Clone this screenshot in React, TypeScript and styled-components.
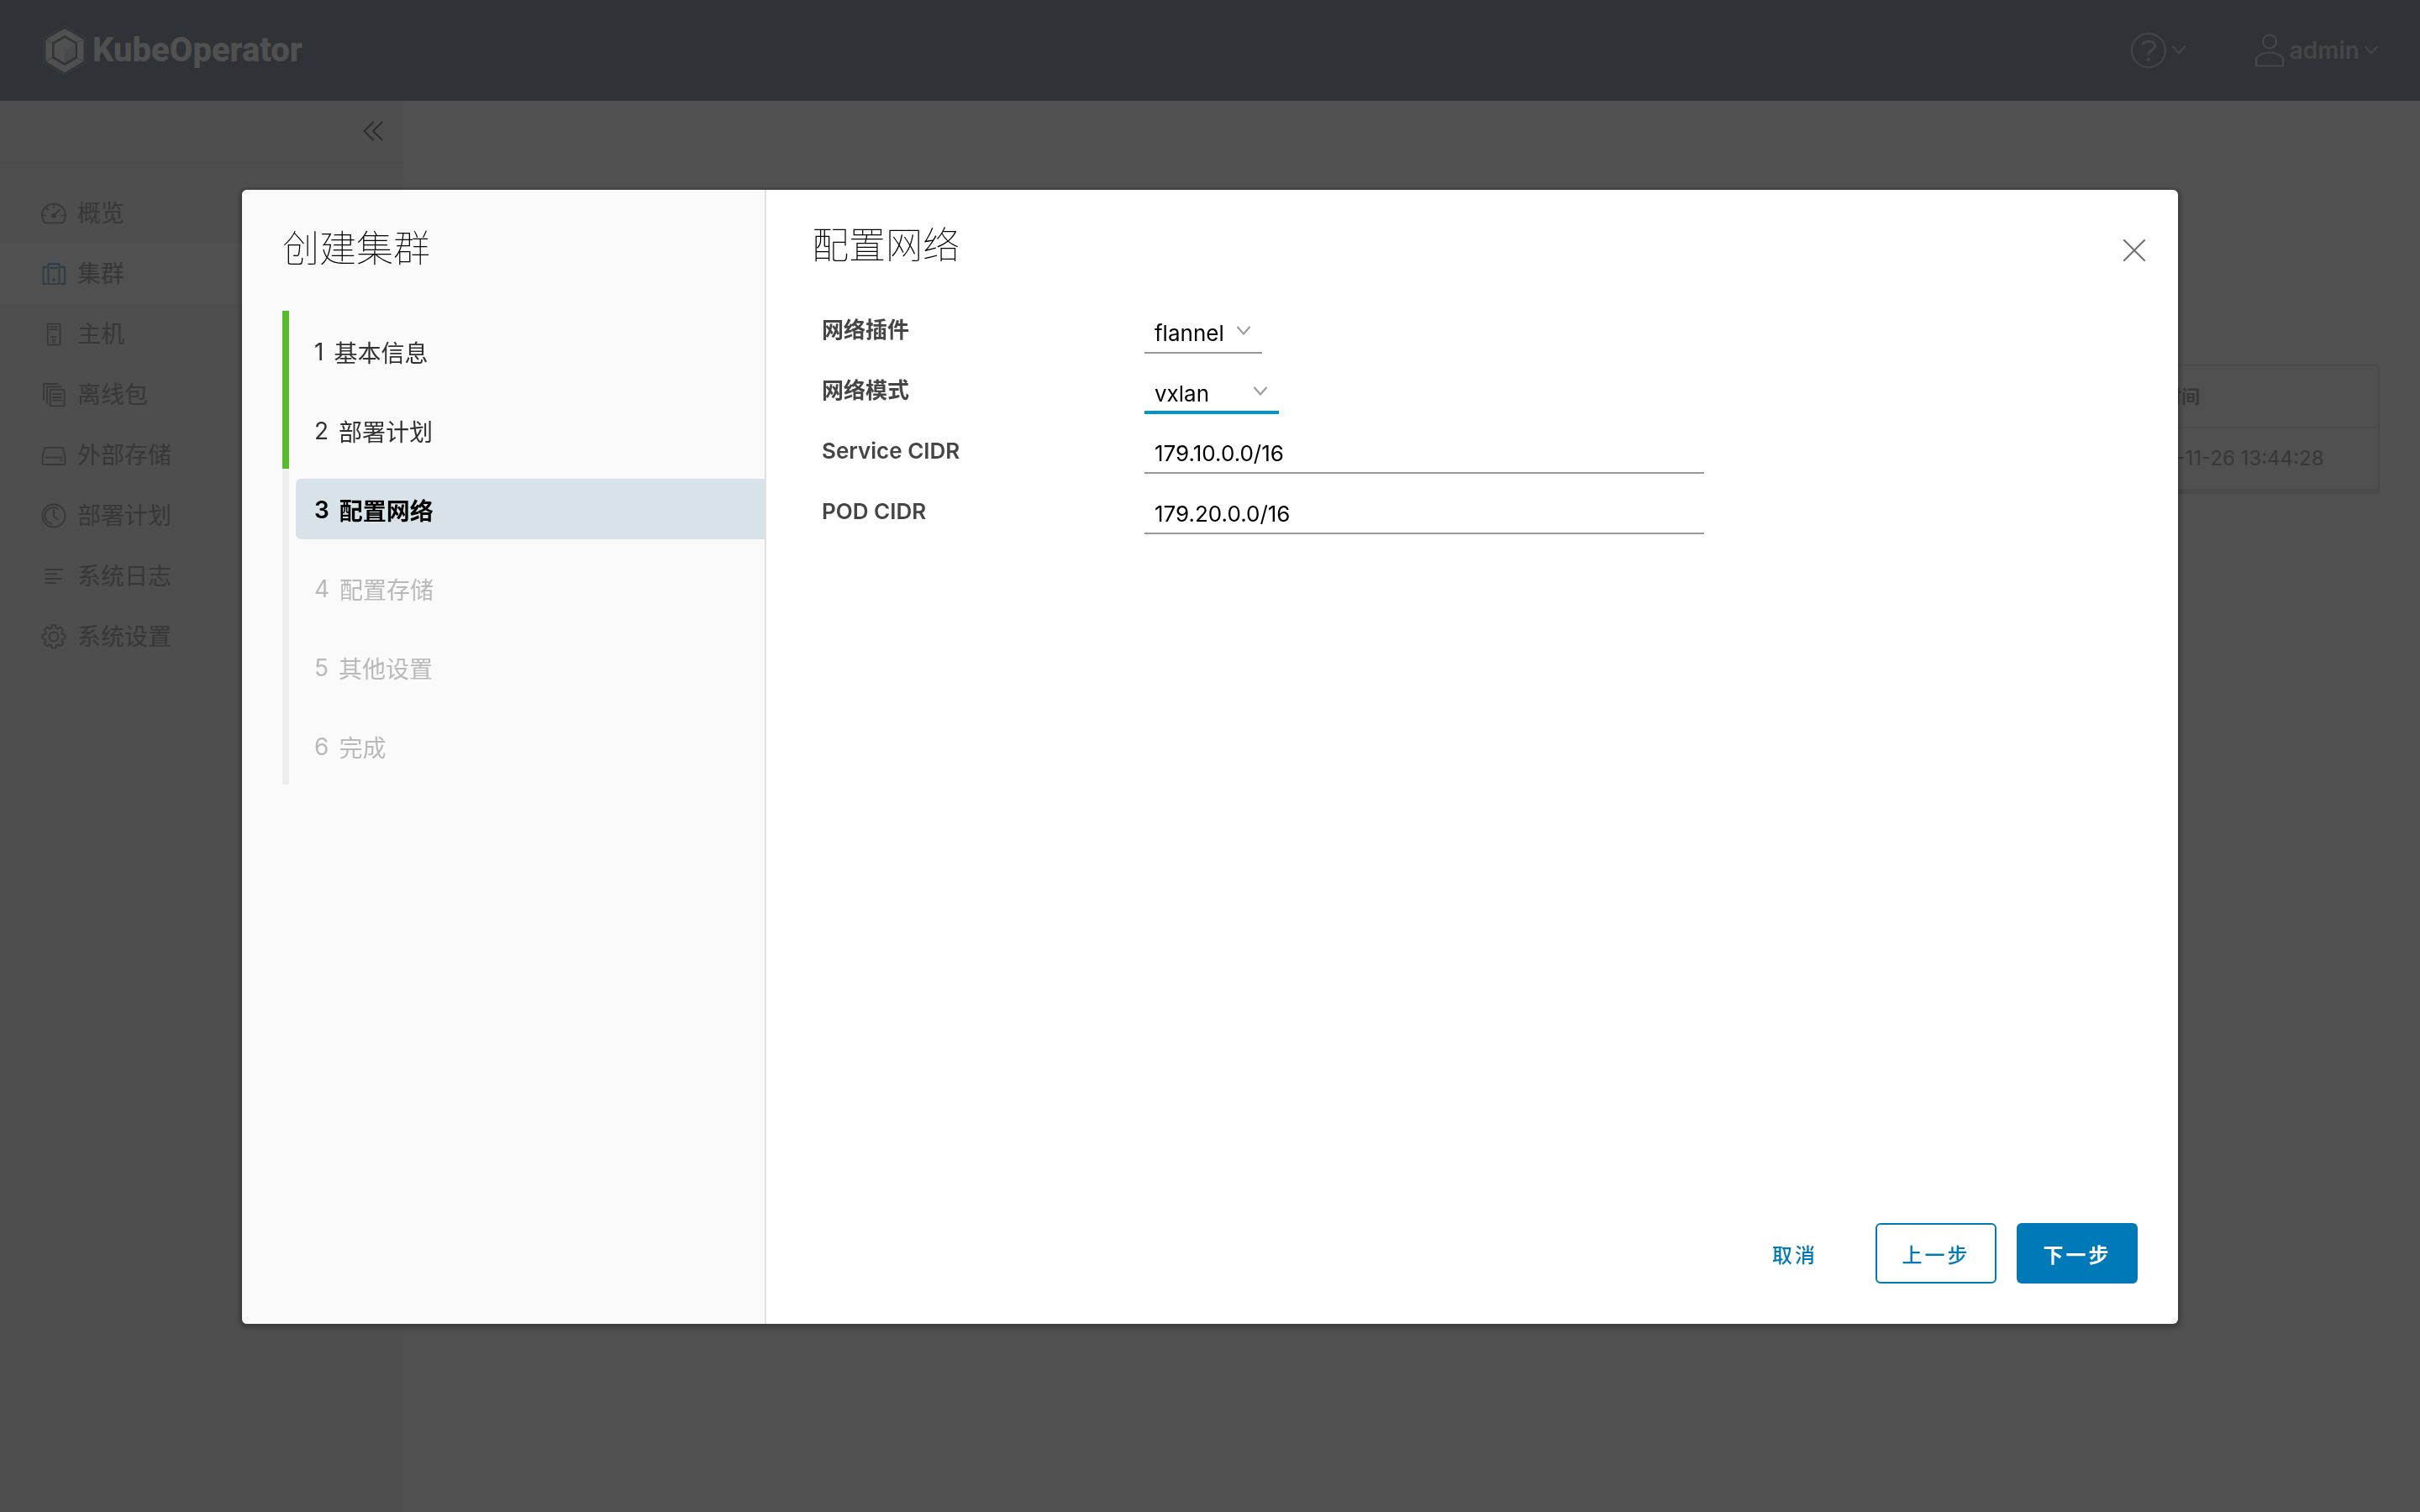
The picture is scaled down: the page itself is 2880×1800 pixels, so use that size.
import React from "react";
import styled, { createGlobalStyle } from "styled-components";

const latin = `Inter, "Noto Sans CJK SC", sans-serif`;

const GlobalStyle = createGlobalStyle`
  *, *::before, *::after { box-sizing: border-box; }
  body {
    margin: 0;
    background: #fafafa;
    color: #565656;
    font-family: ${latin};
    font-size: 28px;
    line-height: 48px;
  }
  button, input, select { font-family: inherit; }
  h1, h2, ul, ol { margin: 0; padding: 0; }
  ul, ol { list-style: none; }
`;

const Shell = styled.div`
  display: flex;
  flex-direction: column;
  min-height: 100vh;
`;

const Header = styled.header`
  display: flex;
  align-items: center;
  justify-content: space-between;
  height: 120px;
  padding: 0 50px;
  background: #253754;
`;

const Brand = styled.a`
  display: flex;
  align-items: center;
  gap: 6px;
  color: #ffffff;
  font-family: Roboto, sans-serif;
  font-size: 40px;
  font-weight: 800;
  text-decoration: none;
`;

const HeaderActions = styled.div`
  display: flex;
  align-items: center;
  gap: 82px;
`;

const HeaderButton = styled.button`
  display: flex;
  align-items: center;
  gap: 6px;
  padding: 0;
  border: 0;
  background: none;
  color: #ffffff;
  opacity: 0.65;
  font-size: 28px;
  font-weight: 600;
  line-height: 48px;
`;

const Body = styled.div`
  display: flex;
  flex: 1;
`;

const Sidebar = styled.nav`
  flex: 0 0 480px;
  background: #eeeeee;
`;

const SidebarTop = styled.div`
  display: flex;
  align-items: center;
  justify-content: flex-end;
  height: 74px;
  padding: 0 20px;
  border-bottom: 2px solid #dddddd;
`;

const CollapseButton = styled.button`
  display: flex;
  padding: 0;
  border: 0;
  background: none;
  color: #000000;
`;

const Menu = styled.ul`
  padding: 24px 0;
`;

const MenuLink = styled.a<{ $active?: boolean }>`
  display: flex;
  align-items: center;
  gap: 12px;
  height: 72px;
  padding: 0 48px;
  background: ${(p) => (p.$active ? "#ffffff" : "transparent")};
  color: #565656;
  text-decoration: none;

  svg {
    color: ${(p) => (p.$active ? "#0079b8" : "#565656")};
  }
`;

const Main = styled.main`
  flex: 1;
  padding: 314px 48px 48px;
`;

const Grid = styled.table`
  width: 100%;
  border: 2px solid #cccccc;
  border-bottom-width: 6px;
  border-radius: 6px 6px 0 0;
  border-spacing: 0;
  background: #ffffff;
  text-align: left;
`;

const GridHead = styled.th`
  width: 324px;
  height: 74px;
  padding: 0 24px;
  border-bottom: 2px solid #dddddd;
  font-size: 22px;
  font-weight: 600;
`;

const GridCell = styled.td`
  height: 72px;
  padding: 0 24px;
  font-size: 24px;
  white-space: nowrap;
`;

const GridSpacer = styled.td<{ $line?: boolean }>`
  border-bottom: ${(p) => (p.$line ? "2px solid #dddddd" : "0")};
`;

const Backdrop = styled.div`
  position: fixed;
  inset: 0;
  padding: 226px 10% 0;
  background: rgba(49, 49, 49, 0.85);
`;

const Wizard = styled.section`
  display: flex;
  height: 75vh;
  border-radius: 6px;
  background: #ffffff;
  box-shadow: 0 2px 4px 4px rgba(0, 0, 0, 0.2);
  overflow: hidden;
`;

const StepPane = styled.aside`
  flex: 0 0 624px;
  padding: 46px 0 48px 48px;
  border-right: 2px solid #e0e0e0;
  background: #fafafa;
`;

const Title = styled.h1`
  color: #000000;
  font-size: 44px;
  font-weight: 100;
  line-height: 48px;
`;

const Steps = styled.ol`
  margin-top: 50px;
`;

const Step = styled.li<{ $done?: boolean }>`
  padding: 12px 0 10px 8px;
  border-left: 8px solid ${(p) => (p.$done ? "#5aba2f" : "#eeeeee")};
`;

type StepState = "done" | "current" | "todo";

const stepColor: Record<StepState, string> = {
  done: "#313131",
  current: "#000000",
  todo: "#b9b9b9",
};

const StepButton = styled.button<{ $state: StepState }>`
  display: flex;
  align-items: center;
  gap: 12px;
  width: 100%;
  height: 72px;
  padding: 2px 22px 0;
  border: 0;
  border-radius: 6px 0 0 6px;
  background: ${(p) => (p.$state === "current" ? "#d8e3e9" : "transparent")};
  color: ${(p) => stepColor[p.$state]};
  font-size: 28px;
  font-weight: ${(p) => (p.$state === "current" ? 600 : 400)};
`;

const Page = styled.div`
  display: flex;
  flex: 1;
  flex-direction: column;
  padding: 42px 48px 48px 54px;
`;

const PageHead = styled.div`
  display: flex;
  align-items: flex-start;
  justify-content: space-between;
`;

const CloseButton = styled.button`
  display: flex;
  margin: 12px -14px 0 0;
  padding: 0;
  border: 0;
  background: none;
  color: #737373;
`;

const Form = styled.form`
  display: flex;
  flex: 1;
  flex-direction: column;
  gap: 24px;
  padding: 56px 12px 0;
`;

const Field = styled.div`
  display: grid;
  grid-template-columns: 384px minmax(0, 666px);
  height: 48px;
`;

const Label = styled.label`
  color: #454545;
  font-size: 26px;
  font-weight: 600;
  line-height: 42px;
`;

const TextInput = styled.input`
  width: 100%;
  height: 48px;
  padding: 0 12px;
  border: 0;
  border-bottom: 2px solid #999999;
  background: none;
  color: #000000;
  font-size: 26px;
  outline: none;
`;

const SelectBox = styled.div<{ $wide?: boolean }>`
  position: relative;
  width: ${(p) => (p.$wide ? 160 : 140)}px;
  color: #999999;

  svg {
    position: absolute;
    top: 14px;
    right: 14px;
    pointer-events: none;
  }
`;

const Select = styled.select<{ $focused?: boolean }>`
  width: 100%;
  height: 48px;
  padding: 0 12px;
  border: 0;
  border-radius: 0;
  appearance: none;
  background: none;
  box-shadow: inset 0 ${(p) => (p.$focused ? "-4px #0094d2" : "-2px #999999")};
  color: #000000;
  font-size: 26px;
  outline: none;
`;

const Footer = styled.footer`
  display: flex;
  justify-content: flex-end;
  gap: 24px;
`;

type ButtonKind = "link" | "outline" | "primary";

const Button = styled.button<{ $kind: ButtonKind }>`
  min-width: 144px;
  height: 72px;
  padding: 0 24px;
  border: 2px solid ${(p) => (p.$kind === "link" ? "transparent" : "#0079b8")};
  border-radius: 6px;
  background: ${(p) => (p.$kind === "primary" ? "#0079b8" : "transparent")};
  color: ${(p) => (p.$kind === "primary" ? "#ffffff" : "#0079b8")};
  font-size: 24px;
  font-weight: ${(p) => (p.$kind === "primary" ? 600 : 500)};
  letter-spacing: 3px;
`;

const strokeProps = {
  fill: "none",
  stroke: "currentColor",
  strokeWidth: 1.8,
  strokeLinecap: "round" as const,
  strokeLinejoin: "round" as const,
};

function Icon({ children }: { children: React.ReactNode }) {
  return (
    <svg width="32" height="32" viewBox="0 0 32 32" aria-hidden="true" {...strokeProps}>
      {children}
    </svg>
  );
}

function Chevron({ size = 16, weight = 2 }: { size?: number; weight?: number }) {
  return (
    <svg width={size} height={size} viewBox="0 0 16 16" aria-hidden="true" {...strokeProps} strokeWidth={weight}>
      <path d="M1 3.5 8 11.5 15 3.5" />
    </svg>
  );
}

function gearPath() {
  const points: string[] = [];
  for (let i = 0; i < 8; i += 1) {
    const base = (i * Math.PI) / 4 - Math.PI / 2;
    const corners: [number, number][] = [
      [-0.27, 10.8],
      [-0.17, 13.8],
      [0.17, 13.8],
      [0.27, 10.8],
    ];
    corners.forEach(([angle, radius]) => {
      const x = 16 + radius * Math.cos(base + angle);
      const y = 16 + radius * Math.sin(base + angle);
      points.push(`${x.toFixed(2)} ${y.toFixed(2)}`);
    });
  }
  return `M${points.join("L")}Z`;
}

const menu: { label: string; active?: boolean; icon: React.ReactNode }[] = [
  {
    label: "概览",
    icon: (
      <>
        <path d="M5.6 27.4C3.3 25 2 21.9 2 18.6a14 14 0 0 1 28 0c0 3.3-1.3 6.4-3.6 8.8z" />
        <path d="M16 5v4M2.5 18.6H6M26 18.6h3.5M7.2 9.4l2.2 2.4M16 18.6l7.2-7" />
        <circle cx="16" cy="18.6" r="2" fill="currentColor" />
      </>
    ),
  },
  {
    label: "集群",
    active: true,
    icon: (
      <>
        <rect x="9.5" y="4.2" width="13" height="24" rx="0.8" />
        <path d="M12.5 9h7M7.5 8H3.5v20h4M24.5 8h4.5v20h-4.5" />
        <circle cx="16" cy="23.2" r="1" fill="currentColor" />
      </>
    ),
  },
  {
    label: "主机",
    icon: (
      <>
        <rect x="8.7" y="3.7" width="14.8" height="24.6" rx="0.5" />
        <path d="M11.5 7.2h9M11.5 10.2h9M12.5 19h7" strokeWidth="1.4" />
        <circle cx="16" cy="23.8" r="1.7" strokeWidth="1.2" />
      </>
    ),
  },
  {
    label: "离线包",
    icon: (
      <>
        <path d="M4 22V3h17M8 26V6.5h16.5" />
        <rect x="11.7" y="9.8" width="16.8" height="19.5" rx="0.5" />
        <path d="M15 15h10M15 19h10M15 22.7h10" />
      </>
    ),
  },
  {
    label: "外部存储",
    icon: (
      <>
        <path d="M6 6.8h20a1 1 0 0 1 1 .8L29.5 17.5V26a1 1 0 0 1-1 1h-25a1 1 0 0 1-1-1V17.5L5 7.6a1 1 0 0 1 1-.8z" />
        <path d="M6 18.7h20M24 22.2h2" />
      </>
    ),
  },
  {
    label: "部署计划",
    icon: (
      <>
        <circle cx="16" cy="16" r="13.5" />
        <path d="M16 9v8l5 3.5M20.5 7.5A9.8 9.8 0 1 0 13.5 25.5" />
      </>
    ),
  },
  { label: "系统日志", icon: <path d="M6 8h20.5M6 13.3h13.5M6 19h19.5M6 24.2h12.5" /> },
  {
    label: "系统设置",
    icon: (
      <>
        <path d={gearPath()} />
        <circle cx="16" cy="16" r="5.5" />
      </>
    ),
  },
];

const steps: { label: string; state: StepState }[] = [
  { label: "基本信息", state: "done" },
  { label: "部署计划", state: "done" },
  { label: "配置网络", state: "current" },
  { label: "配置存储", state: "todo" },
  { label: "其他设置", state: "todo" },
  { label: "完成", state: "todo" },
];

function LogoMark() {
  return (
    <svg width="54" height="60" viewBox="0 0 54 60" aria-hidden="true">
      <path d="M27 1 52 15.5V44.5L27 59 2 44.5V15.5z" fill="none" stroke="#ffffff" strokeOpacity="0.25" strokeWidth="1.5" />
      <path fillRule="evenodd" d="M27 4 49.5 17V43L27 56.5 4.5 43V17zM27 12 12 20.7V39.3L27 48 42 39.3V20.7z" fill="#ffffff" />
      <path d="M4.5 17 12 20.7M49.5 17 42 20.7M4.5 43 12 39.3M49.5 43 42 39.3" stroke="#253754" strokeOpacity="0.5" strokeWidth="1.5" />
      <path d="M27 15 39.5 22V37.5L27 45 14.5 37.5V22z" fill="#ffffff" />
      <path d="M27 30 39.5 22V37.5L27 45z" fill="#cfcfcf" />
    </svg>
  );
}

export default function App() {
  return (
    <>
      <GlobalStyle />
      <Shell>
        <Header>
          <Brand href="#">
            <LogoMark />
            KubeOperator
          </Brand>
          <HeaderActions>
            <HeaderButton aria-label="help">
              <svg width="44" height="44" viewBox="0 0 44 44" aria-hidden="true" {...strokeProps} strokeWidth={2}>
                <circle cx="22" cy="22" r="20" />
                <path d="M15 14.5c1.8-2.3 4.4-3.3 7.3-3.3 4.2 0 7.2 2.3 7.2 5.9 0 5-7.7 4.2-7.7 9.5" strokeWidth="2.5" />
                <circle cx="22" cy="32.7" r="1" fill="currentColor" />
              </svg>
              <Chevron weight={2} />
            </HeaderButton>
            <HeaderButton>
              <svg width="36" height="44" viewBox="0 0 36 44" aria-hidden="true" {...strokeProps} strokeWidth={2.2}>
                <circle cx="18" cy="11.5" r="8" />
                <path d="M2 40.5V31.5c3.5-4.3 9-7 16-7s12.5 2.7 16 7v9z" />
              </svg>
              admin
              <Chevron weight={2} />
            </HeaderButton>
          </HeaderActions>
        </Header>
        <Body>
          <Sidebar>
            <SidebarTop>
              <CollapseButton aria-label="collapse">
                <Icon>
                  <path d="M16 5.5 5.5 16 16 26.5M26.5 5.5 16 16l10.5 10.5" />
                </Icon>
              </CollapseButton>
            </SidebarTop>
            <Menu>
              {menu.map((item) => (
                <li key={item.label}>
                  <MenuLink href="#" $active={item.active}>
                    <Icon>{item.icon}</Icon>
                    {item.label}
                  </MenuLink>
                </li>
              ))}
            </Menu>
          </Sidebar>
          <Main>
            <Grid>
              <thead>
                <tr>
                  <GridSpacer $line />
                  <GridHead>创建时间</GridHead>
                </tr>
              </thead>
              <tbody>
                <tr>
                  <GridSpacer />
                  <GridCell>2020-11-26 13:44:28</GridCell>
                </tr>
              </tbody>
            </Grid>
          </Main>
        </Body>
      </Shell>
      <Backdrop>
        <Wizard role="dialog" aria-modal="true" aria-labelledby="wizard-title">
          <StepPane>
            <Title id="wizard-title">创建集群</Title>
            <Steps>
              {steps.map((step, index) => (
                <Step key={step.label} $done={step.state === "done"}>
                  <StepButton $state={step.state}>
                    <span>{index + 1}</span>
                    <span>{step.label}</span>
                  </StepButton>
                </Step>
              ))}
            </Steps>
          </StepPane>
          <Page>
            <PageHead>
              <Title as="h2">配置网络</Title>
              <CloseButton aria-label="close">
                <svg width="36" height="36" viewBox="0 0 36 36" aria-hidden="true" {...strokeProps} strokeWidth={2.2}>
                  <path d="M6 6 30 30M30 6 6 30" />
                </svg>
              </CloseButton>
            </PageHead>
            <Form>
              <Field>
                <Label htmlFor="plugin">网络插件</Label>
                <SelectBox>
                  <Select id="plugin" defaultValue="flannel">
                    <option>flannel</option>
                  </Select>
                  <Chevron />
                </SelectBox>
              </Field>
              <Field>
                <Label htmlFor="mode">网络模式</Label>
                <SelectBox $wide>
                  <Select id="mode" defaultValue="vxlan" $focused>
                    <option>vxlan</option>
                  </Select>
                  <Chevron />
                </SelectBox>
              </Field>
              <Field>
                <Label htmlFor="service-cidr">Service CIDR</Label>
                <TextInput id="service-cidr" defaultValue="179.10.0.0/16" />
              </Field>
              <Field>
                <Label htmlFor="pod-cidr">POD CIDR</Label>
                <TextInput id="pod-cidr" defaultValue="179.20.0.0/16" />
              </Field>
            </Form>
            <Footer>
              <Button $kind="link">取消</Button>
              <Button $kind="outline">上一步</Button>
              <Button $kind="primary">下一步</Button>
            </Footer>
          </Page>
        </Wizard>
      </Backdrop>
    </>
  );
}
